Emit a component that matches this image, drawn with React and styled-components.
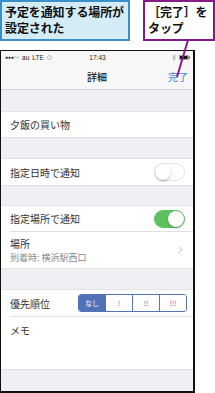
import React from 'react'
import styled, { createGlobalStyle } from 'styled-components'

const GlobalStyle = createGlobalStyle`
  html, body {
    margin: 0;
    padding: 0;
    background: #fff;
  }
  body {
    font-family: "Noto Sans CJK JP", "Noto Sans", sans-serif;
  }
`

const Page = styled.div`
  position: relative;
  width: 215px;
  height: 393px;
  overflow: hidden;
`

const Callouts = styled.div`
  display: flex;
  justify-content: space-between;
  height: 41px;
`

const Note = styled.div`
  box-sizing: border-box;
  height: 41px;
  width: ${p => p.$w}px;
  padding: ${p => p.$pad};
  border: 2px solid ${p => p.$border};
  background: ${p => p.$bg};
  color: #111;
  font-size: 12px;
  font-weight: 700;
  line-height: 15.5px;
  letter-spacing: -0.1px;
  white-space: nowrap;
`

const Pointer = styled.svg`
  position: absolute;
  left: 170px;
  top: 38px;
`

const Phone = styled.div`
  box-sizing: border-box;
  margin-top: 9px;
  width: 195px;
  height: 343px;
  border: 2px solid #111;
  border-left-width: 1px;
  border-top-width: 1px;
  background: #efeff4;
  display: flex;
  flex-direction: column;
`

const StatusBar = styled.div`
  height: 12px;
  background: #f7f7f7;
  display: grid;
  grid-template-columns: 1fr auto 1fr;
  align-items: center;
  padding: 0 3px 0 4px;
  font-family: "Liberation Sans", sans-serif;
  font-size: 6.5px;
  color: #222;
`

const Carrier = styled.div`
  display: flex;
  align-items: center;
  gap: 3px;
  white-space: nowrap;
`

const Dots = styled.span`
  font-size: 5px;
  letter-spacing: -0.2px;
`

const Clock = styled.div`
  font-size: 6.5px;
`

const Indicators = styled.div`
  display: flex;
  justify-content: flex-end;
  align-items: center;
  gap: 3px;
`

const NavBar = styled.div`
  position: relative;
  height: 26px;
  background: #f7f7f7;
  border-bottom: 1px solid #d6d6da;
  display: flex;
  align-items: center;
  justify-content: center;
`

const NavTitle = styled.div`
  font-size: 10px;
  font-weight: 500;
  color: #222;
`

const NavAction = styled.div`
  position: absolute;
  right: 5px;
  top: 6px;
  font-size: 10px;
  color: #3d7fd4;
`

const Gap = styled.div`
  height: ${p => p.$h}px;
  flex-shrink: 0;
`

const Group = styled.div`
  background: #fff;
  border-top: 1px solid #e4e4e8;
  border-bottom: 1px solid #e4e4e8;
`

const Row = styled.div`
  box-sizing: border-box;
  height: ${p => p.$h}px;
  margin-left: 9px;
  padding-right: 8px;
  display: flex;
  align-items: ${p => (p.$top ? 'flex-start' : 'center')};
  justify-content: space-between;
  padding-top: ${p => (p.$top ? '7px' : '0')};
  border-bottom: ${p => (p.$line ? '1px solid #e0e0e4' : 'none')};
  font-size: 10px;
  line-height: 13px;
  color: #333;
`

const Stack = styled.div`
  display: flex;
  flex-direction: column;
  gap: 2px;
`

const Sub = styled.span`
  font-size: 9px;
  line-height: 12px;
  color: #8a8a8e;
`

const Switch = styled.div`
  position: relative;
  box-sizing: border-box;
  width: 31px;
  height: 18px;
  border-radius: 9px;
  background: ${p => (p.$on ? '#5bc25f' : '#fff')};
  border: 1px solid ${p => (p.$on ? '#5bc25f' : '#e3e3e6')};
  &::after {
    content: '';
    position: absolute;
    top: 0;
    left: ${p => (p.$on ? '13px' : '0')};
    width: 16px;
    height: 16px;
    border-radius: 50%;
    background: #fff;
    box-shadow: 0 1px 2px rgba(0, 0, 0, 0.3);
  }
`

const Chevron = styled.svg`
  margin-right: 2px;
`

const Segments = styled.div`
  display: flex;
  margin-right: -2px;
  border: 1px solid #5574b8;
  border-radius: 3px;
  overflow: hidden;
`

const Segment = styled.div`
  width: 26px;
  height: 16px;
  display: flex;
  align-items: center;
  justify-content: center;
  font-size: 7px;
  background: ${p => (p.$active ? '#5172b8' : '#fff')};
  color: ${p => (p.$active ? '#fff' : '#4d6db5')};
  & + & {
    border-left: 1px solid #5574b8;
  }
`

const Fill = styled.div`
  flex: 1;
`

const levels = ['なし', '!', '!!', '!!!']

export default function App() {
  return (
    <Page>
      <GlobalStyle />
      <Callouts>
        <Note $w={130} $pad="2px 0 0 3px" $border="#3a90c9" $bg="#d3ecf6">
          予定を通知する場所が<br />設定された
        </Note>
        <Note $w={72} $pad="2px 0 0 3px" $border="#861a86" $bg="#fff">
          ［完了］を<br />タップ
        </Note>
      </Callouts>
      <Phone>
        <StatusBar>
          <Carrier>
            <Dots>●●●○○</Dots>
            <span>au</span>
            <span>LTE</span>
            <svg width="5" height="5" viewBox="0 0 10 10">
              <circle cx="5" cy="5" r="4" fill="none" stroke="#999" strokeWidth="1.2" />
            </svg>
          </Carrier>
          <Clock>17:43</Clock>
          <Indicators>
            <svg width="4" height="7" viewBox="0 0 8 14">
              <path d="M1 4l6 6-3 3V1l3 3-6 6" fill="none" stroke="#999" strokeWidth="1.2" />
            </svg>
            <svg width="11" height="5" viewBox="0 0 22 10">
              <rect x="0.5" y="0.5" width="18" height="9" rx="1.5" fill="none" stroke="#222" />
              <rect x="2" y="2" width="15" height="6" fill="#111" />
              <rect x="19.5" y="3" width="2" height="4" fill="#222" />
            </svg>
          </Indicators>
        </StatusBar>
        <NavBar>
          <NavTitle>詳細</NavTitle>
          <NavAction>完了</NavAction>
        </NavBar>
        <Gap $h={21} />
        <Group>
          <Row $h={25}>夕飯の買い物</Row>
        </Group>
        <Gap $h={20} />
        <Group>
          <Row $h={26}>
            指定日時で通知
            <Switch />
          </Row>
        </Group>
        <Gap $h={19} />
        <Group>
          <Row $h={26} $line>
            指定場所で通知
            <Switch $on />
          </Row>
          <Row $h={36}>
            <Stack>
              <span>場所</span>
              <Sub>到着時: 横浜駅西口</Sub>
            </Stack>
            <Chevron width="5" height="8" viewBox="0 0 5 8">
              <path d="M0.8 0.8L4 4 0.8 7.2" fill="none" stroke="#c4c4c8" strokeWidth="1" />
            </Chevron>
          </Row>
        </Group>
        <Gap $h={20} />
        <Group>
          <Row $h={27} $line>
            優先順位
            <Segments>
              {levels.map((l, i) => (
                <Segment key={l} $active={i === 0}>{l}</Segment>
              ))}
            </Segments>
          </Row>
          <Row $h={52} $top>メモ</Row>
        </Group>
        <Fill />
      </Phone>
      <Pointer width="24" height="42" viewBox="0 0 24 42">
        <line x1="18" y1="2" x2="7" y2="39" stroke="#861a86" strokeWidth="2" />
      </Pointer>
    </Page>
  )
}
